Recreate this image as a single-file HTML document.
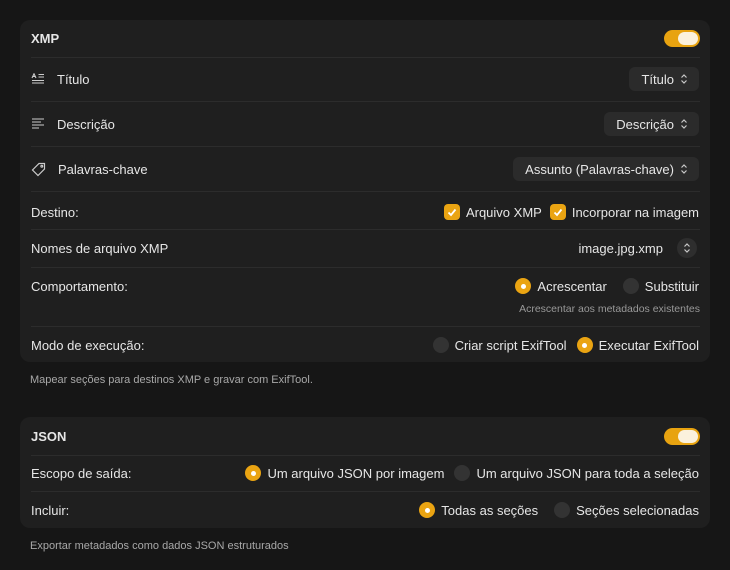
<!DOCTYPE html>
<html><head><style>
*{margin:0;padding:0;box-sizing:border-box}
body{width:730px;height:570px;background:#161616;font-family:"Liberation Sans",sans-serif;font-size:13px;color:#e6e6e6;position:relative;overflow:hidden}
.card{position:absolute;left:20px;width:690px;background:#1f1f1f;border-radius:10px}
.row{position:absolute;left:11px;right:11px;display:flex;align-items:center;justify-content:space-between}
.sep{position:absolute;left:11px;right:10px;height:1px;background:#2c2c2c}
.b{font-weight:bold}
.tog{width:36px;height:17px;border-radius:9px;background:#e8a310;position:relative}
.tog:after{content:"";position:absolute;right:2px;top:2px;width:20px;height:13px;border-radius:7px;background:#fbf1dc}
.pop{background:#2b2b2b;border-radius:6px;height:24px;padding:0 11px 0 12px;display:flex;align-items:center;gap:6px}
.opts{display:flex;align-items:center;gap:8px}
.r{width:16px;height:16px;border-radius:50%;background:#333;display:inline-block;vertical-align:middle;position:relative}
.r.on{background:#eaa412}
.r.on:after{content:"";position:absolute;left:5.5px;top:5.5px;width:5px;height:5px;border-radius:50%;background:#fff}
.cb{width:16px;height:16px;border-radius:4px;background:#eaa412;display:inline-flex;align-items:center;justify-content:center}
.o{display:flex;align-items:center;gap:6px}
.note{position:absolute;left:30px;font-size:11px;color:#a8a8a8}
.lab{display:flex;align-items:center;gap:12px}
</style></head><body>
<svg width="0" height="0" style="position:absolute"><defs><symbol id="ch" viewBox="0 0 8 12"><path d="M1.5 4.5L4 2L6.5 4.5M1.5 7.5L4 10L6.5 7.5" stroke="#c8c8c8" stroke-width="1.2" fill="none"/></symbol></defs></svg>
<div class="card" style="top:20px;height:342px">
 <div class="row b" style="top:10px;height:17px"><span>XMP</span><div class="tog" style="margin-right:-1px"></div></div>
 <div class="sep" style="top:37px"></div>
 <div class="row" style="top:47px;height:24px"><span class="lab"><svg width="14" height="12" viewBox="0 0 14 12" stroke="#ccc" fill="none" stroke-width="1.1"><path d="M1 5L3 0.8L5 5M1.7 3.5H4.3M7.5 1.5H13M7.5 4H13M1 7.5H13M1 10H13"/></svg>Título</span><span class="pop">Título <svg width="8" height="12"><use href="#ch"/></svg></span></div>
 <div class="sep" style="top:81px"></div>
 <div class="row" style="top:92px;height:24px"><span class="lab"><svg width="14" height="12" viewBox="0 0 14 12" stroke="#ccc" fill="none" stroke-width="1.1"><path d="M1 1H13M1 4H10M1 7H13M1 10H8"/></svg>Descrição</span><span class="pop">Descrição <svg width="8" height="12"><use href="#ch"/></svg></span></div>
 <div class="sep" style="top:126px"></div>
 <div class="row" style="top:137px;height:24px"><span class="lab"><svg width="15" height="15" viewBox="0 0 15 15" stroke="#ccc" fill="none" stroke-width="1.2"><path d="M8 1.5H13.5V7L7 13.5L1.5 8Z"/><circle cx="10.8" cy="4.2" r="0.9"/></svg>Palavras-chave</span><span class="pop">Assunto (Palavras-chave) <svg width="8" height="12"><use href="#ch"/></svg></span></div>
 <div class="sep" style="top:171px"></div>
 <div class="row" style="top:183px;height:18px"><span>Destino:</span><span class="opts"><span class="o"><span class="cb"><svg width="10" height="9" viewBox="0 0 10 9"><path d="M1.5 4.5L4 7L8.5 1.5" stroke="#fff" stroke-width="1.8" fill="none"/></svg></span>Arquivo XMP</span><span class="o"><span class="cb"><svg width="10" height="9" viewBox="0 0 10 9"><path d="M1.5 4.5L4 7L8.5 1.5" stroke="#fff" stroke-width="1.8" fill="none"/></svg></span>Incorporar na imagem</span></span></div>
 <div class="sep" style="top:209px"></div>
 <div class="row" style="top:218px;height:20px"><span>Nomes de arquivo XMP</span><span class="opts"><span>image.jpg.xmp</span><span style="width:20px;height:20px;border-radius:50%;background:#2e2e2e;display:inline-flex;align-items:center;justify-content:center;margin-left:6px;margin-right:2px"><svg width="8" height="12"><use href="#ch"/></svg></span></span></div>
 <div class="sep" style="top:247px"></div>
 <div class="row" style="top:257px;height:18px"><span>Comportamento:</span><span class="opts" style="gap:16px"><span class="o"><span class="r on"></span>Acrescentar</span><span class="o"><span class="r"></span>Substituir</span></span></div>
 <div style="position:absolute;right:10px;top:283px;font-size:10.5px;color:#999">Acrescentar aos metadados existentes</div>
 <div class="sep" style="top:306px"></div>
 <div class="row" style="top:316px;height:18px"><span>Modo de execução:</span><span class="opts" style="gap:10px"><span class="o"><span class="r"></span>Criar script ExifTool</span><span class="o"><span class="r on"></span>Executar ExifTool</span></span></div>
</div>
<div class="note" style="top:374px">Mapear seções para destinos XMP e gravar com ExifTool.</div>
<div class="card" style="top:417px;height:111px">
 <div class="row b" style="top:11px;height:17px"><span>JSON</span><div class="tog" style="margin-right:-1px"></div></div>
 <div class="sep" style="top:38px"></div>
 <div class="row" style="top:47px;height:18px"><span>Escopo de saída:</span><span class="opts" style="gap:10px"><span class="o"><span class="r on"></span>Um arquivo JSON por imagem</span><span class="o"><span class="r"></span>Um arquivo JSON para toda a seleção</span></span></div>
 <div class="sep" style="top:74px"></div>
 <div class="row" style="top:84px;height:18px"><span>Incluir:</span><span class="opts" style="gap:16px"><span class="o"><span class="r on"></span>Todas as seções</span><span class="o"><span class="r"></span>Seções selecionadas</span></span></div>
</div>
<div class="note" style="top:540px">Exportar metadados como dados JSON estruturados</div>
</body></html>
